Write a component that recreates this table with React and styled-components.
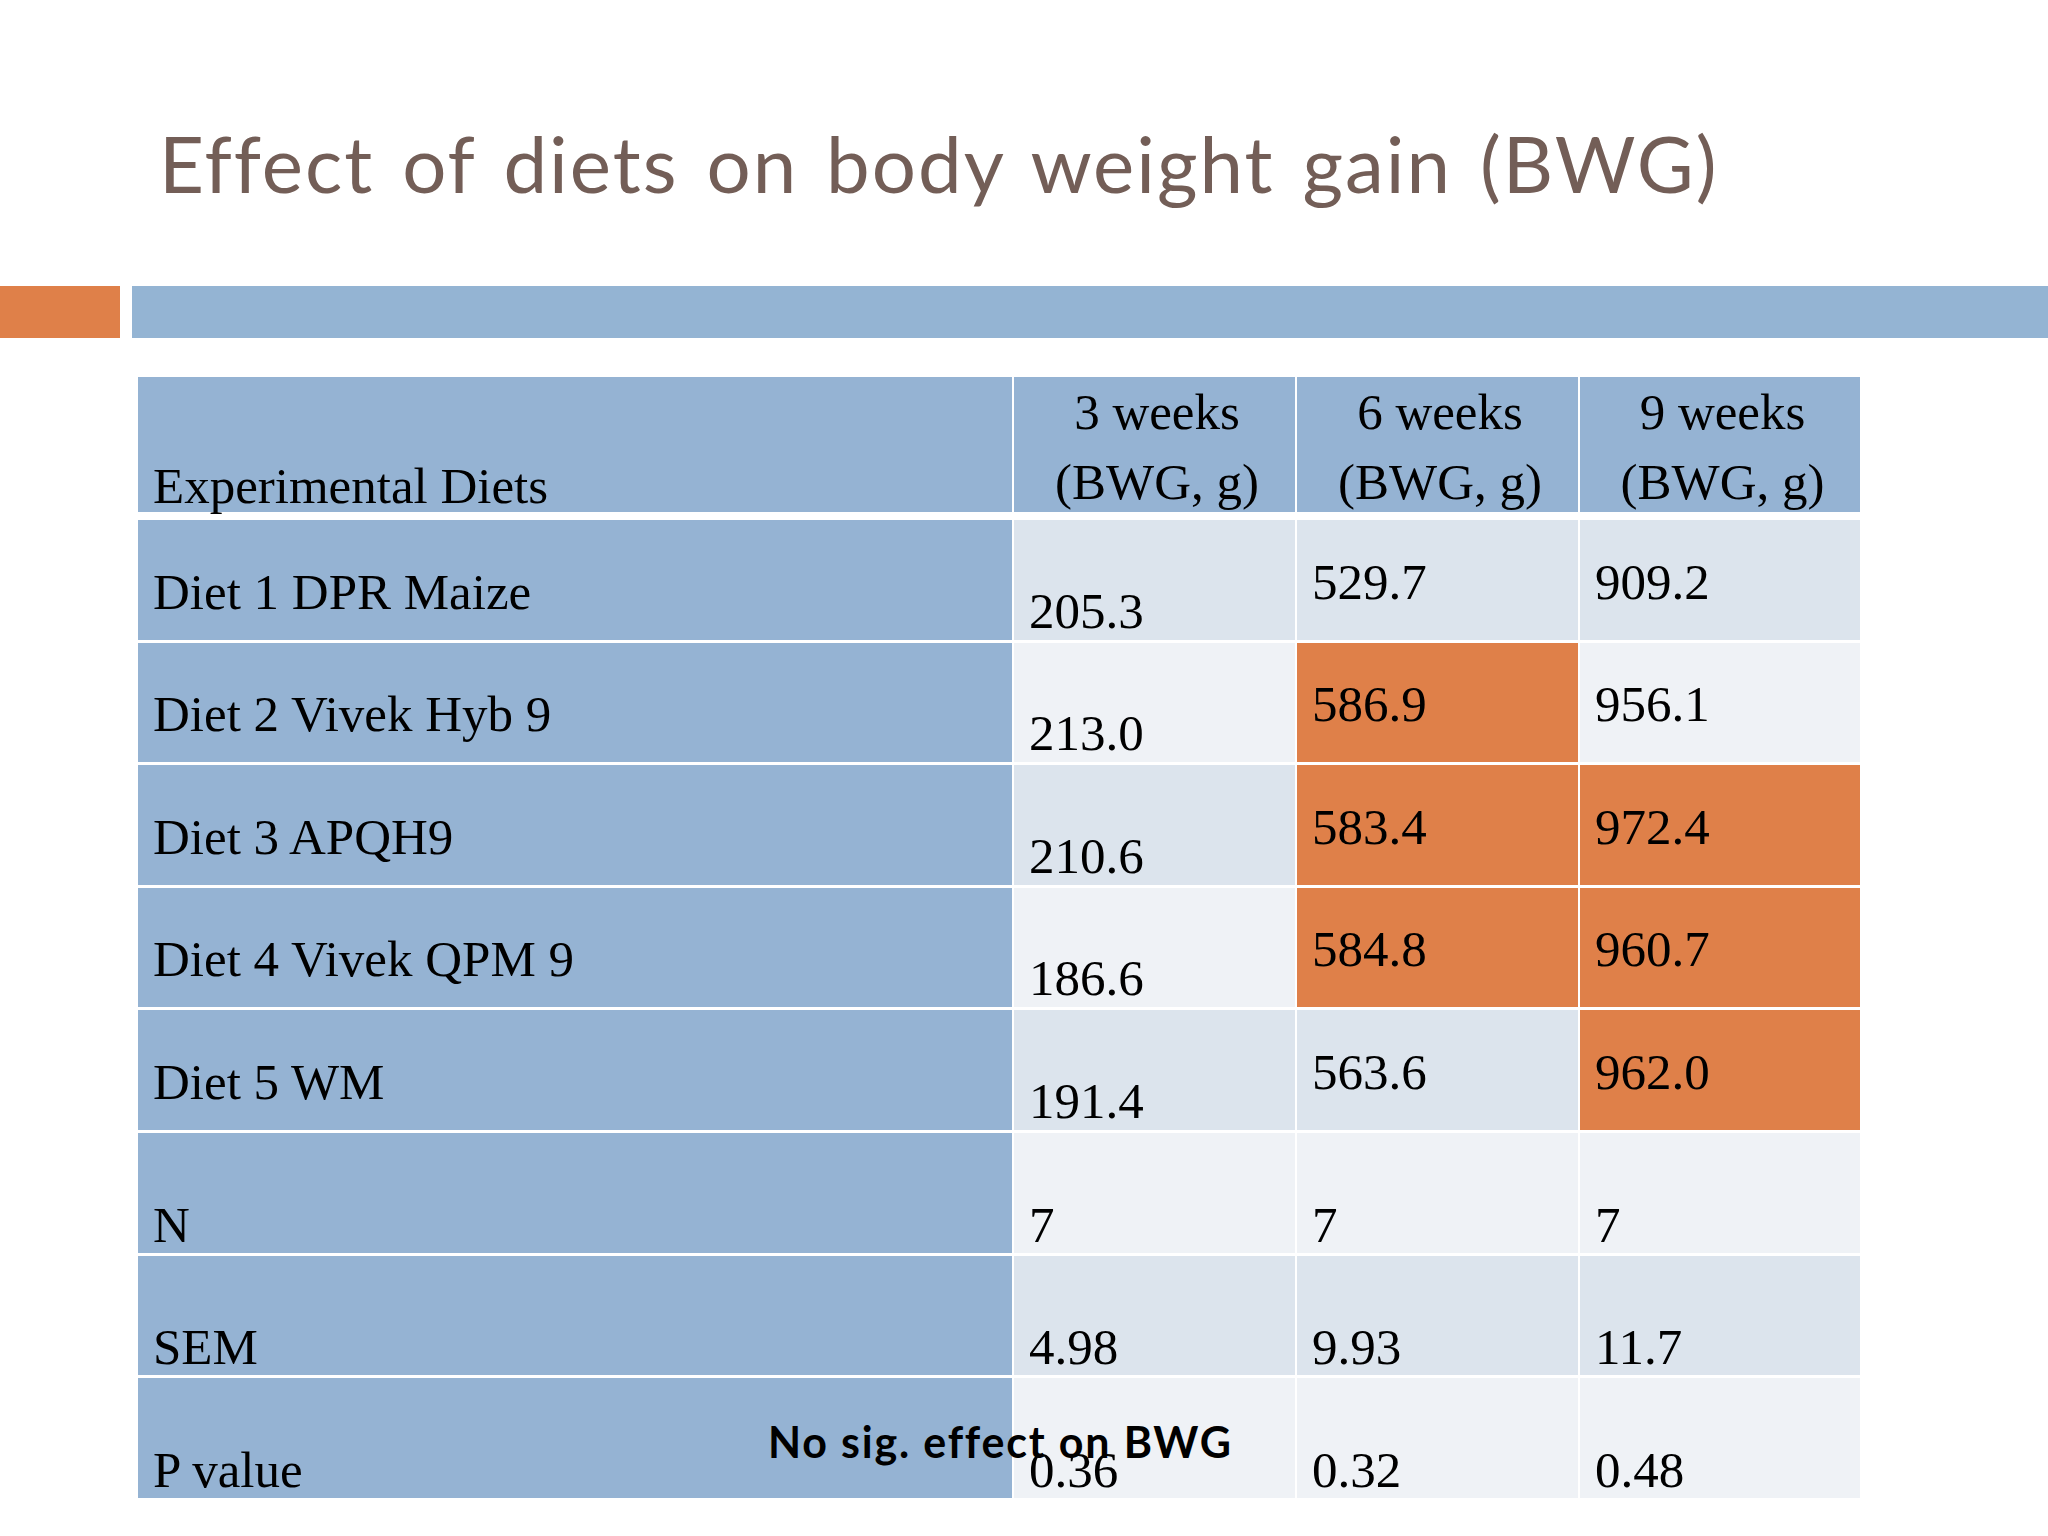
import React from 'react';
import styled, { createGlobalStyle } from 'styled-components';

const GlobalStyle = createGlobalStyle`
  html, body {
    margin: 0;
    padding: 0;
    background: #ffffff;
  }
`;

const Slide = styled.div`
  position: relative;
  width: 2048px;
  height: 1536px;
  background: #ffffff;
  display: flex;
  flex-direction: column;
  overflow: hidden;
`;

const Title = styled.h1`
  margin: 124px 0 0 159px;
  font-family: Lato, 'Open Sans', sans-serif;
  font-weight: 400;
  font-size: 78px;
  line-height: 1;
  letter-spacing: 2px;
  word-spacing: 6px;
  color: #735e57;
  white-space: nowrap;
`;

const AccentRow = styled.div`
  display: flex;
  gap: 12px;
  height: 52px;
  margin-top: 84px;
`;

const AccentBlock = styled.div`
  flex: ${(p) => (p.$grow ? 1 : '0 0 120px')};
  background: ${(p) => p.$color};
`;

const Table = styled.div`
  margin: 39px 0 0 138px;
  display: grid;
  grid-template-columns: 874px 281px 281px 280px;
  grid-template-rows: 140px repeat(8, 119.6px);
  column-gap: 2px;
  row-gap: 3px;
  width: max-content;
  font-family: 'Liberation Serif', 'Times New Roman', serif;
  font-size: 51px;
  color: #000;
`;

const HeadCell = styled.div`
  background: #95b3d3;
  display: flex;
  flex-direction: column;
  justify-content: ${(p) => (p.$bottom ? 'flex-end' : 'flex-start')};
  align-items: ${(p) => (p.$center ? 'center' : 'flex-start')};
  padding: 0 ${(p) => (p.$center ? '10px' : '0')} 0 15px;
  line-height: ${(p) => (p.$bottom ? '51px' : '70px')};
  margin-bottom: 5px;
  white-space: nowrap;
`;

const Cell = styled.div`
  background: ${(p) => p.$bg};
  display: flex;
  align-items: flex-end;
  padding: 0 0 ${(p) => p.$pb}px 15px;
  line-height: 51px;
  white-space: nowrap;
`;

const Note = styled.div`
  position: absolute;
  left: 768px;
  top: 1420px;
  font-family: Lato, 'Open Sans', sans-serif;
  font-weight: 700;
  font-size: 43px;
  letter-spacing: 1.8px;
  line-height: 1;
  color: #000;
  white-space: nowrap;
`;

const BLUE = '#95b3d3';
const ORANGE = '#df8049';
const DARK = '#dce4ed';
const LIGHT = '#eff2f6';

const rows = [
  { label: 'Diet 1 DPR Maize', vals: ['205.3', '529.7', '909.2'], hi: [0, 0, 0] },
  { label: 'Diet 2 Vivek Hyb 9', vals: ['213.0', '586.9', '956.1'], hi: [0, 1, 0] },
  { label: 'Diet 3 APQH9', vals: ['210.6', '583.4', '972.4'], hi: [0, 1, 1] },
  { label: 'Diet 4 Vivek QPM 9', vals: ['186.6', '584.8', '960.7'], hi: [0, 1, 1] },
  { label: 'Diet 5 WM', vals: ['191.4', '563.6', '962.0'], hi: [0, 0, 1] },
  { label: 'N', vals: ['7', '7', '7'], hi: [0, 0, 0], stat: true },
  { label: 'SEM', vals: ['4.98', '9.93', '11.7'], hi: [0, 0, 0], stat: true },
  { label: 'P value', vals: ['0.36', '0.32', '0.48'], hi: [0, 0, 0], stat: true },
];

const weeks = ['3 weeks', '6 weeks', '9 weeks'];

export default function App() {
  return (
    <>
      <GlobalStyle />
      <Slide>
        <Title>Effect of diets on body weight gain (BWG)</Title>
        <AccentRow>
          <AccentBlock $color="#df8049" />
          <AccentBlock $color="#94b4d3" $grow />
        </AccentRow>

        <Table>
          <HeadCell $bottom>Experimental Diets</HeadCell>
          {weeks.map((w) => (
            <HeadCell key={w} $center>
              <span>{w}</span>
              <span>(BWG, g)</span>
            </HeadCell>
          ))}

          {rows.map((r, i) => {
            const shade = i % 2 === 0 ? DARK : LIGHT;
            return (
              <React.Fragment key={r.label}>
                <Cell $bg={BLUE} $pb={r.stat ? 2 : 22}>{r.label}</Cell>
                {r.vals.map((v, j) => {
                  let pb = 2;
                  if (!r.stat && j === 0) pb = 3;
                  if (!r.stat && j > 0) pb = 32;
                  return (
                    <Cell key={j} $bg={r.hi[j] ? ORANGE : shade} $pb={pb}>
                      {v}
                    </Cell>
                  );
                })}
              </React.Fragment>
            );
          })}
        </Table>

        <Note>No sig. effect on BWG</Note>
      </Slide>
    </>
  );
}
